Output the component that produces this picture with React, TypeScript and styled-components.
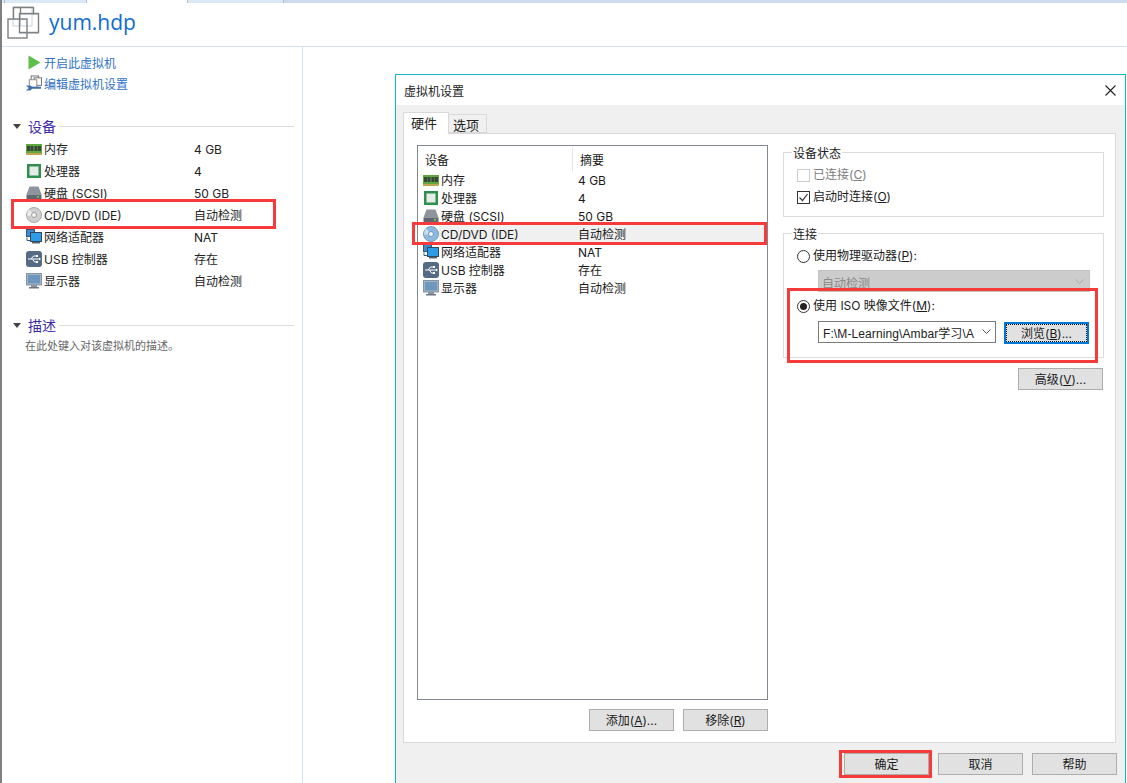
import React from "react";
import styled, { createGlobalStyle } from "styled-components";

const GlobalStyle = createGlobalStyle`
    html, body {
        margin: 0;
        padding: 0;
        background: #ffffff;
    }
    body {
        width: 1127px;
        height: 783px;
        overflow: hidden;
        font-family: Inter, "Noto Sans CJK SC", sans-serif;
        font-size: 12px;
        color: #1a1a1a;
    }
`;

const Page = styled.div`
    position: relative;
    width: 1127px;
    height: 783px;
    overflow: hidden;
    border-left: 2px solid #7f7f7f;
    box-sizing: border-box;
    display: flex;
    flex-direction: column;
`;

const TabStrip = styled.div`
    height: 3px;
    display: flex;
    background: #cfdaec;
`;

const StripTab = styled.div<{ $w: number; $active?: boolean }>`
    width: ${(p) => p.$w}px;
    background: ${(p) => (p.$active ? "#ffffff" : "#dbe9f6")};
    border-right: 1px solid #a9bdd4;
    box-sizing: border-box;
`;

const Header = styled.div`
    height: 44px;
    flex: none;
    box-sizing: border-box;
    border-bottom: 1px solid #d3e2f0;
    display: flex;
    align-items: center;
    gap: 9px;
    padding: 0 0 5px 5px;
`;

const Title = styled.div`
    font-family: "Open Sans", "Liberation Sans", sans-serif;
    font-size: 21px;
    line-height: 28px;
    color: #0f6cd0;
`;

const Main = styled.div`
    flex: 1;
    display: flex;
`;

const Sidebar = styled.div`
    width: 301px;
    box-sizing: border-box;
    border-right: 1px solid #d3e2f0;
    padding: 5px 8px 0 9px;
`;

const ActionRow = styled.div`
    height: 21px;
    display: flex;
    align-items: center;
    color: #2f73c9;
    font-size: 12px;
    gap: 2px;
`;

const IconSlot = styled.div`
    width: 16px;
    margin-left: 15px;
    height: 16px;
    flex: none;
    display: flex;
    align-items: center;
    justify-content: center;
`;

const SectionHead = styled.div<{ $top: number }>`
    margin-top: ${(p) => p.$top}px;
    display: flex;
    align-items: center;
    height: 20px;
    color: #3c2aa6;
    font-size: 14px;
`;

const Arrow = styled.div`
    width: 0;
    height: 0;
    margin: 1px 7px 0 2px;
    border-left: 4.5px solid transparent;
    border-right: 4.5px solid transparent;
    border-top: 5px solid #444444;
`;

const SectionLine = styled.div`
    flex: 1;
    height: 1px;
    margin-left: 3px;
    background: #dcdcdc;
`;

const DeviceList = styled.div`
    padding-top: 2px;
`;

const SideRow = styled.div`
    height: 22px;
    display: flex;
    align-items: center;
    gap: 2px;
    line-height: 16px;
`;

const SideName = styled.div`
    width: 148px;
    flex: none;
    padding-top: 1px;
    color: #222222;
`;

const SideValue = styled.div`
    padding-top: 1px;
    color: #222222;
`;

const Description = styled.div`
    margin: 2px 0 0 14px;
    color: #666666;
    font-size: 11px;
`;

const Dialog = styled.div`
    position: absolute;
    left: 393px;
    top: 74px;
    width: 731px;
    height: 720px;
    box-sizing: border-box;
    border: 1px solid #17b3c6;
    background: #f0f0f0;
    display: flex;
    flex-direction: column;
`;

const DialogTitle = styled.div`
    height: 30px;
    flex: none;
    background: #ffffff;
    display: flex;
    align-items: center;
    justify-content: space-between;
    padding: 0 9px 0 8px;
    font-size: 12px;
    color: #222222;
`;

const DialogBody = styled.div`
    padding: 7px 9px 0 7px;
`;

const TabBar = styled.div`
    height: 21px;
    display: flex;
    align-items: flex-end;
    position: relative;
    z-index: 1;
`;

const Tab = styled.div<{ $active?: boolean }>`
    box-sizing: border-box;
    height: ${(p) => (p.$active ? 22 : 19)}px;
    width: ${(p) => (p.$active ? 46 : 38)}px;
    margin-bottom: ${(p) => (p.$active ? -1 : 0)}px;
    padding: ${(p) => (p.$active ? "1px 0 0 7px" : "1px 0 0 4px")};
    font-size: 13px;
    line-height: 18px;
    color: #222222;
    background: ${(p) => (p.$active ? "#ffffff" : "#f0f0f0")};
    border: 1px solid #d9d9d9;
    border-bottom: ${(p) => (p.$active ? "none" : "1px solid #d9d9d9")};
    border-left: ${(p) => (p.$active ? "1px solid #d9d9d9" : "none")};
`;

const TabPanel = styled.div`
    height: 610px;
    box-sizing: border-box;
    background: #ffffff;
    border: 1px solid #d9d9d9;
    padding: 11px 11px 0 13px;
    display: flex;
    gap: 15px;
`;

const LeftColumn = styled.div`
    width: 351px;
    flex: none;
`;

const ListBox = styled.div`
    height: 555px;
    box-sizing: border-box;
    border: 1px solid #828790;
`;

const ListHead = styled.div`
    height: 25px;
    display: flex;
    align-items: center;
`;

const HeadCell = styled.div<{ $w: number; $sep?: boolean }>`
    width: ${(p) => p.$w}px;
    box-sizing: border-box;
    padding-left: 7px;
    height: 24px;
    line-height: 28px;
    border-right: ${(p) => (p.$sep ? "1px solid #e5e5e5" : "none")};
`;

const ListRow = styled.div<{ $selected?: boolean }>`
    height: 18px;
    display: flex;
    align-items: center;
    position: relative;
    padding-left: 5px;
    line-height: 16px;
    &::before {
        content: "";
        display: ${(p) => (p.$selected ? "block" : "none")};
        position: absolute;
        left: 21px;
        right: 0;
        top: 0;
        bottom: 0;
        background: #f0f0f0;
    }
`;

const ListIcon = styled.div`
    width: 16px;
    height: 16px;
    flex: none;
    position: relative;
    display: flex;
    align-items: center;
    justify-content: center;
`;

const ListName = styled.div`
    width: 137px;
    margin-left: 2px;
    padding-top: 1px;
    flex: none;
    position: relative;
`;

const ListValue = styled.div`
    padding-top: 1px;
    position: relative;
`;

const ListFooter = styled.div`
    display: flex;
    justify-content: flex-end;
    gap: 9px;
    margin-top: 9px;
`;

const Button = styled.div<{ $focus?: boolean }>`
    width: 85px;
    height: 22px;
    flex: none;
    box-sizing: border-box;
    border: ${(p) => (p.$focus ? "2px solid #0078d7" : "1px solid #adadad")};
    margin-top: ${(p) => (p.$focus ? 1 : 0)}px;
    padding-top: 2px;
    background: #e1e1e1;
    display: flex;
    align-items: center;
    justify-content: center;
    color: #1a1a1a;
    font-size: 12px;
    line-height: 16px;
    position: relative;
    &::after {
        content: "";
        display: ${(p) => (p.$focus ? "block" : "none")};
        position: absolute;
        inset: 0;
        border: 1px dotted #111111;
    }
`;

const Key = styled.span`
    text-decoration: underline;
`;

const RightColumn = styled.div`
    width: 321px;
    flex: none;
    display: flex;
    flex-direction: column;
    padding-top: 7px;
`;

const Group = styled.div<{ $h: number; $top?: number; $pad: number }>`
    position: relative;
    height: ${(p) => p.$h}px;
    margin-top: ${(p) => p.$top || 0}px;
    box-sizing: border-box;
    border: 1px solid #dcdcdc;
    padding: ${(p) => p.$pad}px 0 0 13px;
`;

const Legend = styled.div`
    position: absolute;
    left: 8px;
    top: -7px;
    padding: 0 1px;
    background: #ffffff;
    line-height: 16px;
    color: #222222;
`;

const OptionRow = styled.div<{ $disabled?: boolean; $h?: number; $top?: number }>`
    height: ${(p) => p.$h || 22}px;
    margin-top: ${(p) => p.$top || 0}px;
    display: flex;
    align-items: center;
    gap: 3px;
    line-height: 16px;
    color: ${(p) => (p.$disabled ? "#7d7d7d" : "#1a1a1a")};
`;

const CheckBox = styled.div<{ $disabled?: boolean }>`
    width: 13px;
    height: 13px;
    box-sizing: border-box;
    border: 1px solid ${(p) => (p.$disabled ? "#cccccc" : "#333333")};
    background: #ffffff;
    display: flex;
    align-items: center;
    justify-content: center;
`;

const Radio = styled.div<{ $on?: boolean }>`
    width: 13px;
    height: 13px;
    box-sizing: border-box;
    border-radius: 50%;
    border: 1px solid #333333;
    background: #ffffff;
    display: flex;
    align-items: center;
    justify-content: center;
    &::after {
        content: "";
        display: ${(p) => (p.$on ? "block" : "none")};
        width: 7px;
        height: 7px;
        border-radius: 50%;
        background: #222222;
    }
`;

const DisabledSelect = styled.div`
    width: 272px;
    height: 22px;
    margin: 5px 0 0 21px;
    box-sizing: border-box;
    background: #cccccc;
    border: 1px solid #c4c4c4;
    color: #8a8a8a;
    padding: 2px 5px 0 3px;
    display: flex;
    align-items: center;
    justify-content: space-between;
`;

const IsoRow = styled.div`
    display: flex;
    align-items: flex-start;
    gap: 8px;
    margin: 5px 0 0 21px;
`;

const Combo = styled.div`
    width: 178px;
    height: 22px;
    box-sizing: border-box;
    background: #ffffff;
    border: 1px solid #7a7a7a;
    padding: 0 4px;
    display: flex;
    align-items: center;
    justify-content: space-between;
    white-space: nowrap;
    overflow: hidden;
    font-family: "Liberation Sans", "Noto Sans CJK SC", sans-serif;
    letter-spacing: 0.1px;
    color: #222222;
`;

const AdvancedRow = styled.div`
    display: flex;
    justify-content: flex-end;
    margin: 10px 1px 0 0;
`;

const DialogFooter = styled.div`
    display: flex;
    justify-content: flex-end;
    gap: 9px;
    margin-right: -1px;
    padding-top: 10px;
`;

const Mark = styled.div<{ $l: number; $t: number; $w: number; $h: number }>`
    position: absolute;
    left: ${(p) => p.$l}px;
    top: ${(p) => p.$t}px;
    width: ${(p) => p.$w}px;
    height: ${(p) => p.$h}px;
    box-sizing: border-box;
    border: 3px solid #f73a3a;
    pointer-events: none;
    z-index: 5;
`;

const VmIcon = () => (
    <svg width="33" height="33" viewBox="0 0 33 33" fill="none">
        <rect x="12.5" y="8.5" width="19" height="19" stroke="#c5d3e0" />
        <rect x="6" y="1" width="19" height="19" stroke="#c5d3e0" />
        <path d="M1 13.5h19M13.5 1v19" stroke="#c5d3e0" />
        <path d="M13.5 8.5V1.5H26.5V8.5" stroke="#7f7f7f" strokeWidth="1.4" />
        <rect x="12.5" y="7.5" width="19" height="19" stroke="#7f7f7f" strokeWidth="1.4" />
        <rect x="1" y="13" width="19" height="19" stroke="#7f7f7f" strokeWidth="1.4" />
        <path d="M6.5 13V1.5H13.5" stroke="#7f7f7f" strokeWidth="1.4" />
    </svg>
);

const PlayIcon = () => (
    <svg width="13" height="15" viewBox="0 0 13 15">
        <path d="M0.5 0.5L12.5 7.5L0.5 14.5Z" fill="#5cc04a" />
    </svg>
);

const EditIcon = () => (
    <svg width="17" height="17" viewBox="0 0 17 17" fill="none">
        <rect x="5.5" y="0.5" width="8" height="7" fill="#ffffff" stroke="#6f6f6f" />
        <rect x="8.5" y="2.5" width="8" height="8" fill="#ffffff" stroke="#6f6f6f" />
        <rect x="3.5" y="4.5" width="8" height="8" fill="#ffffff" stroke="#8a8a8a" />
        <path d="M0 10.5H4.5L6.5 12H16V14H6.5L4.5 16H0L3 13.2Z" fill="#3f6ea8" />
    </svg>
);

const RamIcon = () => (
    <svg width="16" height="11" viewBox="0 0 16 11">
        <rect x="0" y="0" width="16" height="9" fill="#5fa83f" />
        <rect x="1" y="2" width="3" height="5" fill="#3a463a" />
        <rect x="4.5" y="2" width="3" height="5" fill="#3a463a" />
        <rect x="8.5" y="2" width="3" height="5" fill="#3a463a" />
        <rect x="12" y="2" width="3" height="5" fill="#3a463a" />
        <rect x="0" y="9" width="16" height="2" fill="#bfa64f" />
    </svg>
);

const CpuIcon = () => (
    <svg width="14" height="14" viewBox="0 0 14 14">
        <rect x="0" y="0" width="14" height="14" fill="#2f8f4f" />
        <rect x="2.5" y="2.5" width="9" height="9" fill="#e8ece8" />
    </svg>
);

const DiskIcon = () => (
    <svg width="16" height="14" viewBox="0 0 16 14">
        <path d="M3.5 0.5H12.5L15.5 8.5H0.5Z" fill="#8d949c" />
        <path d="M0.5 8.5H15.5V13H0.5Z" fill="#5f6770" />
        <rect x="11" y="10" width="2" height="1.5" fill="#7fd04f" />
    </svg>
);

const CdIcon = ({ tint }: { tint?: boolean }) => (
    <svg width="16" height="16" viewBox="0 0 16 16">
        <circle cx="8" cy="8" r="7.5" fill={tint ? "#8fb9dc" : "#cfcfcf"} stroke={tint ? "#6d9cc4" : "#a8a8a8"} />
        <path d="M8 8L3 2.5A7 7 0 0 0 1.5 9Z" fill={tint ? "#c7deef" : "#ececec"} />
        <circle cx="8" cy="8" r="2.5" fill="#f2f2f2" stroke={tint ? "#6d9cc4" : "#9f9f9f"} />
    </svg>
);

const NetIcon = () => (
    <svg width="16" height="16" viewBox="0 0 16 16">
        <rect x="0.5" y="0.5" width="8" height="7" fill="#3e8ad0" stroke="#34587c" />
        <path d="M1 8.5V11.5H4" stroke="#34587c" fill="none" />
        <rect x="4.5" y="3.5" width="11" height="9" fill="#2c9be8" stroke="#33475c" />
        <rect x="6" y="13" width="8" height="1.5" fill="#5c6670" />
    </svg>
);

const UsbIcon = () => (
    <svg width="16" height="16" viewBox="0 0 16 16">
        <rect x="0" y="0" width="16" height="16" rx="3" fill="#546a85" />
        <path d="M2 8H13M5 8L7.5 5H10M6.5 8L8.5 11H10" stroke="#ffffff" strokeWidth="1" fill="none" />
        <path d="M13 6.5L15 8L13 9.5Z" fill="#ffffff" />
        <rect x="10" y="4" width="2" height="2" fill="#ffffff" />
        <rect x="10" y="10" width="2" height="2" fill="#ffffff" />
    </svg>
);

const MonitorIcon = () => (
    <svg width="16" height="16" viewBox="0 0 16 16">
        <rect x="0.5" y="0.5" width="15" height="11.5" fill="#9fb4c8" stroke="#8a949e" />
        <rect x="2" y="2" width="12" height="8.5" fill="#6e97bd" />
        <rect x="5" y="12" width="6" height="2" fill="#8a949e" />
        <rect x="3" y="14" width="10" height="1.5" fill="#6d7680" />
    </svg>
);

const Chevron = ({ color }: { color: string }) => (
    <svg width="9" height="6" viewBox="0 0 9 6" fill="none">
        <path d="M0.5 0.5L4.5 4.5L8.5 0.5" stroke={color} />
    </svg>
);

const CloseIcon = () => (
    <svg width="11" height="11" viewBox="0 0 11 11" fill="none">
        <path d="M0.5 0.5L10.5 10.5M10.5 0.5L0.5 10.5" stroke="#222222" strokeWidth="1.1" />
    </svg>
);

const devices = [
    { name: "内存", value: "4 GB", Icon: RamIcon },
    { name: "处理器", value: "4", Icon: CpuIcon },
    { name: "硬盘 (SCSI)", value: "50 GB", Icon: DiskIcon },
    { name: "CD/DVD (IDE)", value: "自动检测", Icon: CdIcon },
    { name: "网络适配器", value: "NAT", Icon: NetIcon },
    { name: "USB 控制器", value: "存在", Icon: UsbIcon },
    { name: "显示器", value: "自动检测", Icon: MonitorIcon },
];

const App = () => {
    return (
        <>
            <GlobalStyle />
            <Page>
                <TabStrip>
                    <StripTab $w={3} />
                    <StripTab $w={82} />
                    <StripTab $w={101} $active />
                    <StripTab $w={96} />
                </TabStrip>
                <Header>
                    <VmIcon />
                    <Title>yum.hdp</Title>
                </Header>
                <Main>
                    <Sidebar>
                        <ActionRow>
                            <IconSlot><PlayIcon /></IconSlot>
                            开启此虚拟机
                        </ActionRow>
                        <ActionRow>
                            <IconSlot><EditIcon /></IconSlot>
                            编辑虚拟机设置
                        </ActionRow>
                        <SectionHead $top={22}>
                            <Arrow />
                            设备
                            <SectionLine />
                        </SectionHead>
                        <DeviceList>
                            {devices.map(({ name, value, Icon }) => (
                                <SideRow key={name}>
                                    <IconSlot><Icon /></IconSlot>
                                    <SideName>{name}</SideName>
                                    <SideValue>{value}</SideValue>
                                </SideRow>
                            ))}
                        </DeviceList>
                        <SectionHead $top={23}>
                            <Arrow />
                            描述
                            <SectionLine />
                        </SectionHead>
                        <Description>在此处键入对该虚拟机的描述。</Description>
                    </Sidebar>
                </Main>

                <Dialog>
                    <DialogTitle>
                        虚拟机设置
                        <CloseIcon />
                    </DialogTitle>
                    <DialogBody>
                        <TabBar>
                            <Tab $active>硬件</Tab>
                            <Tab>选项</Tab>
                        </TabBar>
                        <TabPanel>
                            <LeftColumn>
                                <ListBox>
                                    <ListHead>
                                        <HeadCell $w={155} $sep>设备</HeadCell>
                                        <HeadCell $w={150}>摘要</HeadCell>
                                    </ListHead>
                                    {devices.map(({ name, value, Icon }, i) => (
                                        <ListRow key={name} $selected={i === 3}>
                                            <ListIcon>
                                                {i === 3 ? <CdIcon tint /> : <Icon />}
                                            </ListIcon>
                                            <ListName>{name}</ListName>
                                            <ListValue>{value}</ListValue>
                                        </ListRow>
                                    ))}
                                </ListBox>
                                <ListFooter>
                                    <Button><span>添加(<Key>A</Key>)...</span></Button>
                                    <Button><span>移除(<Key>R</Key>)</span></Button>
                                </ListFooter>
                            </LeftColumn>
                            <RightColumn>
                                <Group $h={65} $pad={11}>
                                    <Legend>设备状态</Legend>
                                    <OptionRow $disabled>
                                        <CheckBox $disabled />
                                        <span>已连接(<Key>C</Key>)</span>
                                    </OptionRow>
                                    <OptionRow>
                                        <CheckBox>
                                            <svg width="11" height="11" viewBox="0 0 11 11" fill="none">
                                                <path d="M1.5 5.5L4.5 8.5L9.5 2" stroke="#333333" strokeWidth="1.2" />
                                            </svg>
                                        </CheckBox>
                                        <span>启动时连接(<Key>O</Key>)</span>
                                    </OptionRow>
                                </Group>
                                <Group $h={125} $top={16} $pad={13}>
                                    <Legend>连接</Legend>
                                    <OptionRow $h={18}>
                                        <Radio />
                                        <span>使用物理驱动器(<Key>P</Key>):</span>
                                    </OptionRow>
                                    <DisabledSelect>
                                        自动检测
                                        <Chevron color="#a8a8a8" />
                                    </DisabledSelect>
                                    <OptionRow $h={20} $top={4}>
                                        <Radio $on />
                                        <span>使用 ISO 映像文件(<Key>M</Key>):</span>
                                    </OptionRow>
                                    <IsoRow>
                                        <Combo>
                                            F:\M-Learning\Ambar学习\A
                                            <Chevron color="#555555" />
                                        </Combo>
                                        <Button $focus><span>浏览(<Key>B</Key>)...</span></Button>
                                    </IsoRow>
                                </Group>
                                <AdvancedRow>
                                    <Button><span>高级(<Key>V</Key>)...</span></Button>
                                </AdvancedRow>
                            </RightColumn>
                        </TabPanel>
                        <DialogFooter>
                            <Button>确定</Button>
                            <Button>取消</Button>
                            <Button>帮助</Button>
                        </DialogFooter>
                    </DialogBody>
                </Dialog>

                <Mark $l={9} $t={199} $w={265} $h={30} />
                <Mark $l={410} $t={222} $w={355} $h={23} />
                <Mark $l={785} $t={288} $w={311} $h={75} />
                <Mark $l={837} $t={750} $w={93} $h={28} />
            </Page>
        </>
    );
};

export default App;
